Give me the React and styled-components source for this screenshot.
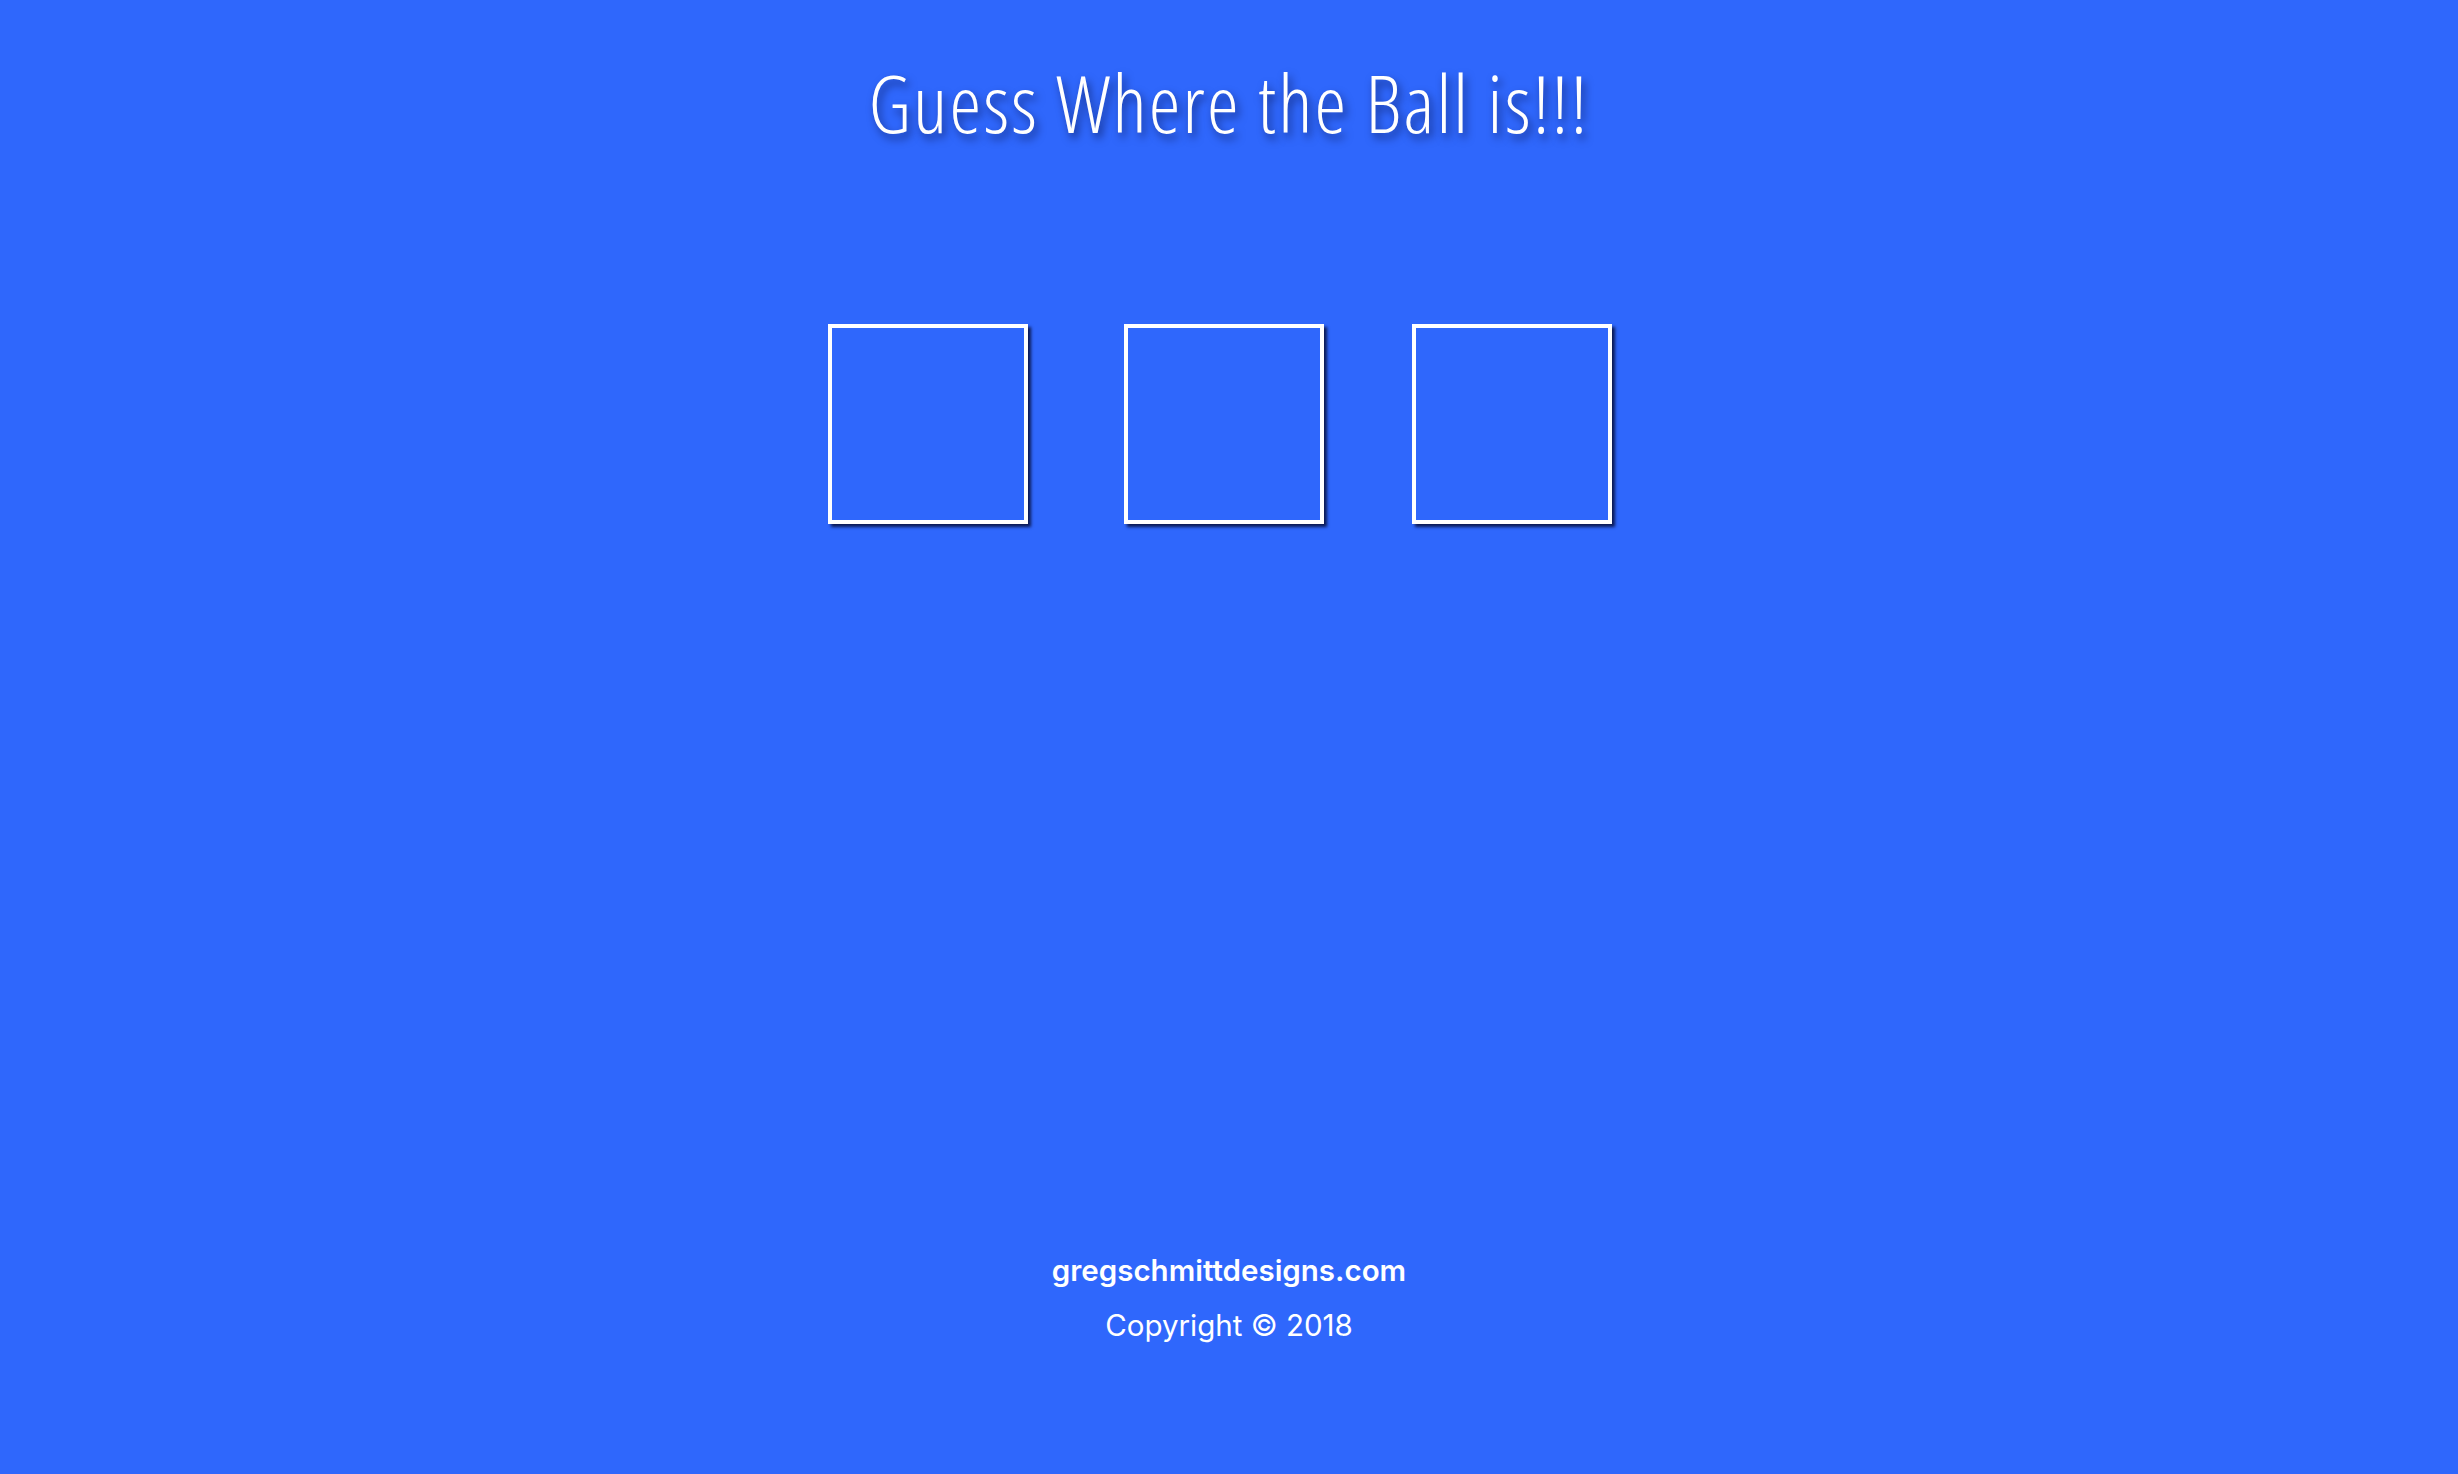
import React from 'react';
import styled, { createGlobalStyle } from 'styled-components';

const GlobalStyle = createGlobalStyle`
  html, body {
    margin: 0;
    padding: 0;
    background: #2f67fc;
  }
  #root {
    min-height: 100vh;
  }
`;

const Page = styled.div`
  min-height: 100vh;
  display: flex;
  flex-direction: column;
  align-items: center;
  background: #2f67fc;
  color: #fff;
`;

const Title = styled.h1`
  margin: 52px 0 0;
  font-family: "Open Sans", "DejaVu Sans", sans-serif;
  font-weight: 300;
  font-stretch: 75%;
  font-size: 80px;
  line-height: 100px;
  letter-spacing: 2.2px;
  text-shadow: 3px 5px 8px rgba(0, 0, 40, 0.55);
`;

const Board = styled.div`
  display: flex;
  margin-top: 172px;
  padding-right: 18px;
`;

const Cup = styled.div`
  box-sizing: border-box;
  width: 200px;
  height: 200px;
  border: 4px solid #fff;
  box-shadow: 3px 3px 3px rgba(0, 0, 30, 0.75);
  margin-left: ${({ gap }) => `${gap}px`};
`;

const Footer = styled.footer`
  margin-top: auto;
  padding-bottom: 131px;
  display: flex;
  flex-direction: column;
  align-items: center;
  font-family: "Inter", "Liberation Sans", sans-serif;
`;

const Site = styled.div`
  font-size: 29.5px;
  font-weight: 600;
  line-height: 36px;
`;

const Copy = styled.div`
  margin-top: 19px;
  font-size: 29.5px;
  font-weight: 400;
  line-height: 36px;
`;

const App = () => (
  <Page>
    <GlobalStyle />
    <Title>Guess Where the Ball is!!!</Title>
    <Board>
      <Cup gap={0} />
      <Cup gap={96} />
      <Cup gap={88} />
    </Board>
    <Footer>
      <Site>gregschmittdesigns.com</Site>
      <Copy>Copyright © 2018</Copy>
    </Footer>
  </Page>
);

export default App;
